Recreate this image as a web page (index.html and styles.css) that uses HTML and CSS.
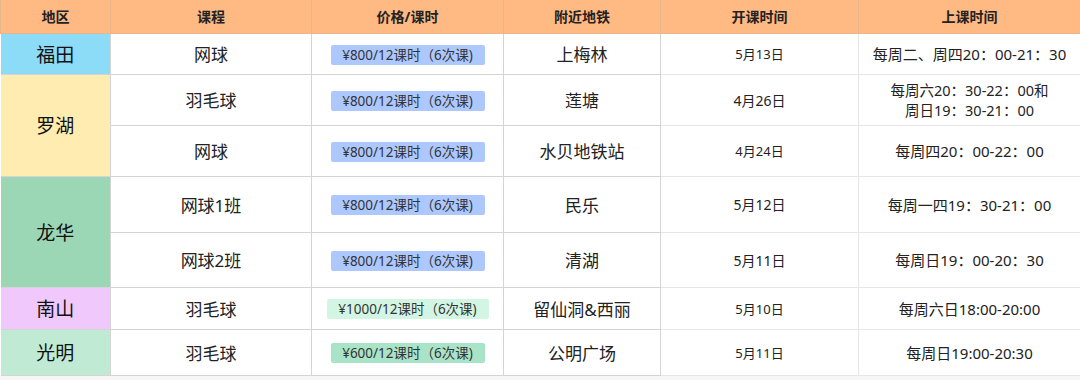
FILE: index.html
```html
<!DOCTYPE html>
<html lang="zh">
<head>
<meta charset="utf-8">
<link rel="stylesheet" href="styles.css">
</head>
<body>
<table class="schedule">
  <colgroup>
    <col class="c-area"><col class="c-course"><col class="c-price"><col class="c-metro"><col class="c-start"><col class="c-time">
  </colgroup>
  <thead>
    <tr class="h-row">
      <th>地区</th><th>课程</th><th>价格/课时</th><th>附近地铁</th><th>开课时间</th><th>上课时间</th>
    </tr>
  </thead>
  <tbody>
    <tr class="r1">
      <td class="area futian">福田</td>
      <td class="course">网球</td>
      <td class="price"><span class="tag blue">¥800/12课时（6次课)</span></td>
      <td class="metro">上梅林</td>
      <td class="start">5月13日</td>
      <td class="time">每周二、周四20：00-21：30</td>
    </tr>
    <tr class="r2">
      <td class="area luohu" rowspan="2">罗湖</td>
      <td class="course">羽毛球</td>
      <td class="price"><span class="tag blue">¥800/12课时（6次课)</span></td>
      <td class="metro">莲塘</td>
      <td class="start big">4月26日</td>
      <td class="time two">每周六20：30-22：00和<br>周日19：30-21：00</td>
    </tr>
    <tr class="r3">
      <td class="course">网球</td>
      <td class="price"><span class="tag blue">¥800/12课时（6次课)</span></td>
      <td class="metro">水贝地铁站</td>
      <td class="start">4月24日</td>
      <td class="time">每周四20：00-22：00</td>
    </tr>
    <tr class="r4">
      <td class="area longhua" rowspan="2">龙华</td>
      <td class="course">网球1班</td>
      <td class="price"><span class="tag blue">¥800/12课时（6次课)</span></td>
      <td class="metro">民乐</td>
      <td class="start big">5月12日</td>
      <td class="time">每周一四19：30-21：00</td>
    </tr>
    <tr class="r5">
      <td class="course">网球2班</td>
      <td class="price"><span class="tag blue">¥800/12课时（6次课)</span></td>
      <td class="metro">清湖</td>
      <td class="start big">5月11日</td>
      <td class="time">每周日19：00-20：30</td>
    </tr>
    <tr class="r6">
      <td class="area nanshan">南山</td>
      <td class="course">羽毛球</td>
      <td class="price"><span class="tag mint">¥1000/12课时（6次课)</span></td>
      <td class="metro">留仙洞&amp;西丽</td>
      <td class="start">5月10日</td>
      <td class="time">每周六日18:00-20:00</td>
    </tr>
    <tr class="r7">
      <td class="area guangming">光明</td>
      <td class="course">羽毛球</td>
      <td class="price"><span class="tag green">¥600/12课时（6次课)</span></td>
      <td class="metro">公明广场</td>
      <td class="start">5月11日</td>
      <td class="time">每周日19:00-20:30</td>
    </tr>
  </tbody>
</table>
</body>
</html>
```
FILE: styles.css
```css
html, body {
  margin: 0;
  padding: 0;
  background: #f6f6f6;
}
body {
  width: 1080px;
  height: 380px;
  overflow: hidden;
  font-family: "Noto Sans", "Noto Sans CJK SC", sans-serif;
  color: #222;
}
.schedule {
  width: 1080px;
  table-layout: fixed;
  border-collapse: collapse;
  background: #fff;
}
.c-area { width: 110px; }
.c-course { width: 201px; }
.c-price { width: 192px; }
.c-metro { width: 157px; }
.c-start { width: 198px; }
.c-time { width: 222px; }

.schedule th,
.schedule td {
  padding: 0;
  text-align: center;
  vertical-align: middle;
  border: 1px solid #d4d4d4;
  white-space: nowrap;
}
.schedule td.start,
.schedule td.time {
  border-color: #e6e6e6;
}
.schedule th {
  background: #ffb982;
  font-size: 14px;
  font-weight: 700;
  color: #222;
  border-color: #e9b58c;
  border-top: none;
}
.h-row { height: 33px; }
.r1 { height: 41px; }
.r2 { height: 51px; }
.r3 { height: 51px; }
.r4 { height: 56px; }
.r5 { height: 55px; }
.r6 { height: 42px; }
.r7 { height: 46px; }

.area {
  font-size: 19px;
  color: #111;
}
.schedule td.area { border-left: none; }
.futian { background: #8cdcf8; }
.luohu { background: #ffecb0; }
.longhua { background: #9bd7b4; }
.nanshan { background: #f0c8fc; }
.guangming { background: #c0ead4; }

.course,
.metro {
  font-size: 17px;
  color: #222;
}
.start {
  font-size: 13px;
  color: #222;
}
.start.big { font-size: 14px; }
.time {
  font-size: 15px;
  color: #222;
}
.time.two {
  font-size: 14.5px;
  line-height: 20px;
}
.tag {
  display: inline-block;
  height: 20px;
  line-height: 20px;
  padding: 0 8px;
  border-radius: 2px;
  font-size: 13.5px;
  color: #333;
}
.tag.blue { background: #adc8ff; width: 138px; }
.tag.mint { background: #d3f5e4; width: 146px; }
.tag.green { background: #a9e3c8; width: 138px; }
.schedule td:last-child { border-right: 1px solid #e6e6e6; }
```
